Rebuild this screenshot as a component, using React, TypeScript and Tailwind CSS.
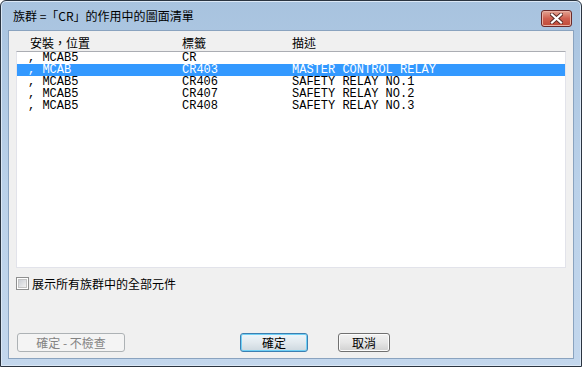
import React from "react";

const rows = [
  { loc: ", MCAB5", tag: "CR", desc: "" },
  { loc: ", MCAB", tag: "CR403", desc: "MASTER CONTROL RELAY", selected: true },
  { loc: ", MCAB5", tag: "CR406", desc: "SAFETY RELAY NO.1" },
  { loc: ", MCAB5", tag: "CR407", desc: "SAFETY RELAY NO.2" },
  { loc: ", MCAB5", tag: "CR408", desc: "SAFETY RELAY NO.3" },
];

const cjk = "font-['Segoe_UI','Noto_Sans_CJK_TC',sans-serif]";

export default function App() {
  return (
    <div className="h-[367px] w-[582px] bg-white">
      <div className="flex h-full w-full flex-col rounded-t-[6px] border border-[#2a3440] bg-gradient-to-b from-[#a8c3df] via-[#bad1e9] to-[#c3d7ed] px-[7px] pb-[7px] shadow-[inset_0_0_0_1px_#dbe8f6]">
        {/* title bar */}
        <div className="relative flex h-[29px] items-center">
          <span className={`${cjk} pl-[5px] text-[12px] leading-none text-black`}>
            族群 =「CR」的作用中的圖面清單
          </span>
          <button className="absolute top-[9px] right-[2px] flex h-[17px] w-[31px] items-center justify-center rounded-[3px] border border-[#6a2a2a] bg-gradient-to-b from-[#e2a493] via-[#cf6050] to-[#c04a38] shadow-[inset_0_0_0_1px_#e9b1a4]">
            <svg width="13" height="11" viewBox="0 0 13 11">
              <path
                d="M2 1.5 L11 9.5 M11 1.5 L2 9.5"
                stroke="#5a2a24"
                strokeWidth="4"
                strokeLinecap="square"
              />
              <path
                d="M2 1.5 L11 9.5 M11 1.5 L2 9.5"
                stroke="#ffffff"
                strokeWidth="2.2"
                strokeLinecap="square"
              />
            </svg>
          </button>
        </div>

        {/* client */}
        <div className="flex flex-1 flex-col border border-[#8aa3bf] bg-[#f0f0f0] px-[7px] pb-[6px]">
          {/* column headers */}
          <div className={`${cjk} flex h-[20px] items-center pt-[3px] text-[12px] leading-none text-black`}>
            <div className="w-[166px] pl-[14px]">安裝，位置</div>
            <div className="w-[110px]">標籤</div>
            <div>描述</div>
          </div>

          {/* list */}
          <div className="h-[217px] border border-[#e2e3ea] border-t-[#abadb3] bg-white">
            {rows.map((r, i) => (
              <div
                key={i}
                className={`flex h-[12px] items-center font-['Liberation_Mono',monospace] text-[12px] leading-none ${
                  r.selected ? "bg-[#3399ff] text-white" : "text-black"
                }`}
              >
                <div className="w-[165px] pl-[11px] whitespace-pre">{r.loc}</div>
                <div className="w-[110px]">{r.tag}</div>
                <div className="whitespace-pre">{r.desc}</div>
              </div>
            ))}
          </div>

          {/* checkbox */}
          <label className="mt-[9px] flex items-center gap-[3px]">
            <span className="flex h-[13px] w-[13px] items-center justify-center border border-[#8e8f8f] bg-white">
              <span className="h-[9px] w-[9px] border border-[#c4c4c4] bg-gradient-to-br from-[#cbcfd5] to-[#f1f1f1]" />
            </span>
            <span className={`${cjk} text-[12px] leading-none text-black`}>
              展示所有族群中的全部元件
            </span>
          </label>

          <div className="flex-1" />

          {/* buttons */}
          <div className={`${cjk} flex items-end text-[12px] leading-none`}>
            <button className="ml-[1px] flex h-[19px] w-[108px] items-center justify-center rounded-[3px] border border-[#adb2b5] bg-[#f4f4f4] text-[#838383]">
              確定 - 不檢查
            </button>
            <button className="ml-[115px] flex h-[19px] w-[68px] items-center justify-center rounded-[3px] border border-[#3c7fb1] bg-gradient-to-b from-[#eef6fb] via-[#e2e9ee] to-[#cdd8df] text-black shadow-[inset_0_0_0_1px_#70d0f6]">
              確定
            </button>
            <button className="ml-[30px] flex h-[19px] w-[52px] items-center justify-center rounded-[3px] border border-[#707070] bg-gradient-to-b from-[#f2f2f2] via-[#e6e6e6] to-[#d0d0d0] text-black shadow-[inset_0_0_0_1px_#fcfcfc]">
              取消
            </button>
          </div>
        </div>
      </div>
    </div>
  );
}
